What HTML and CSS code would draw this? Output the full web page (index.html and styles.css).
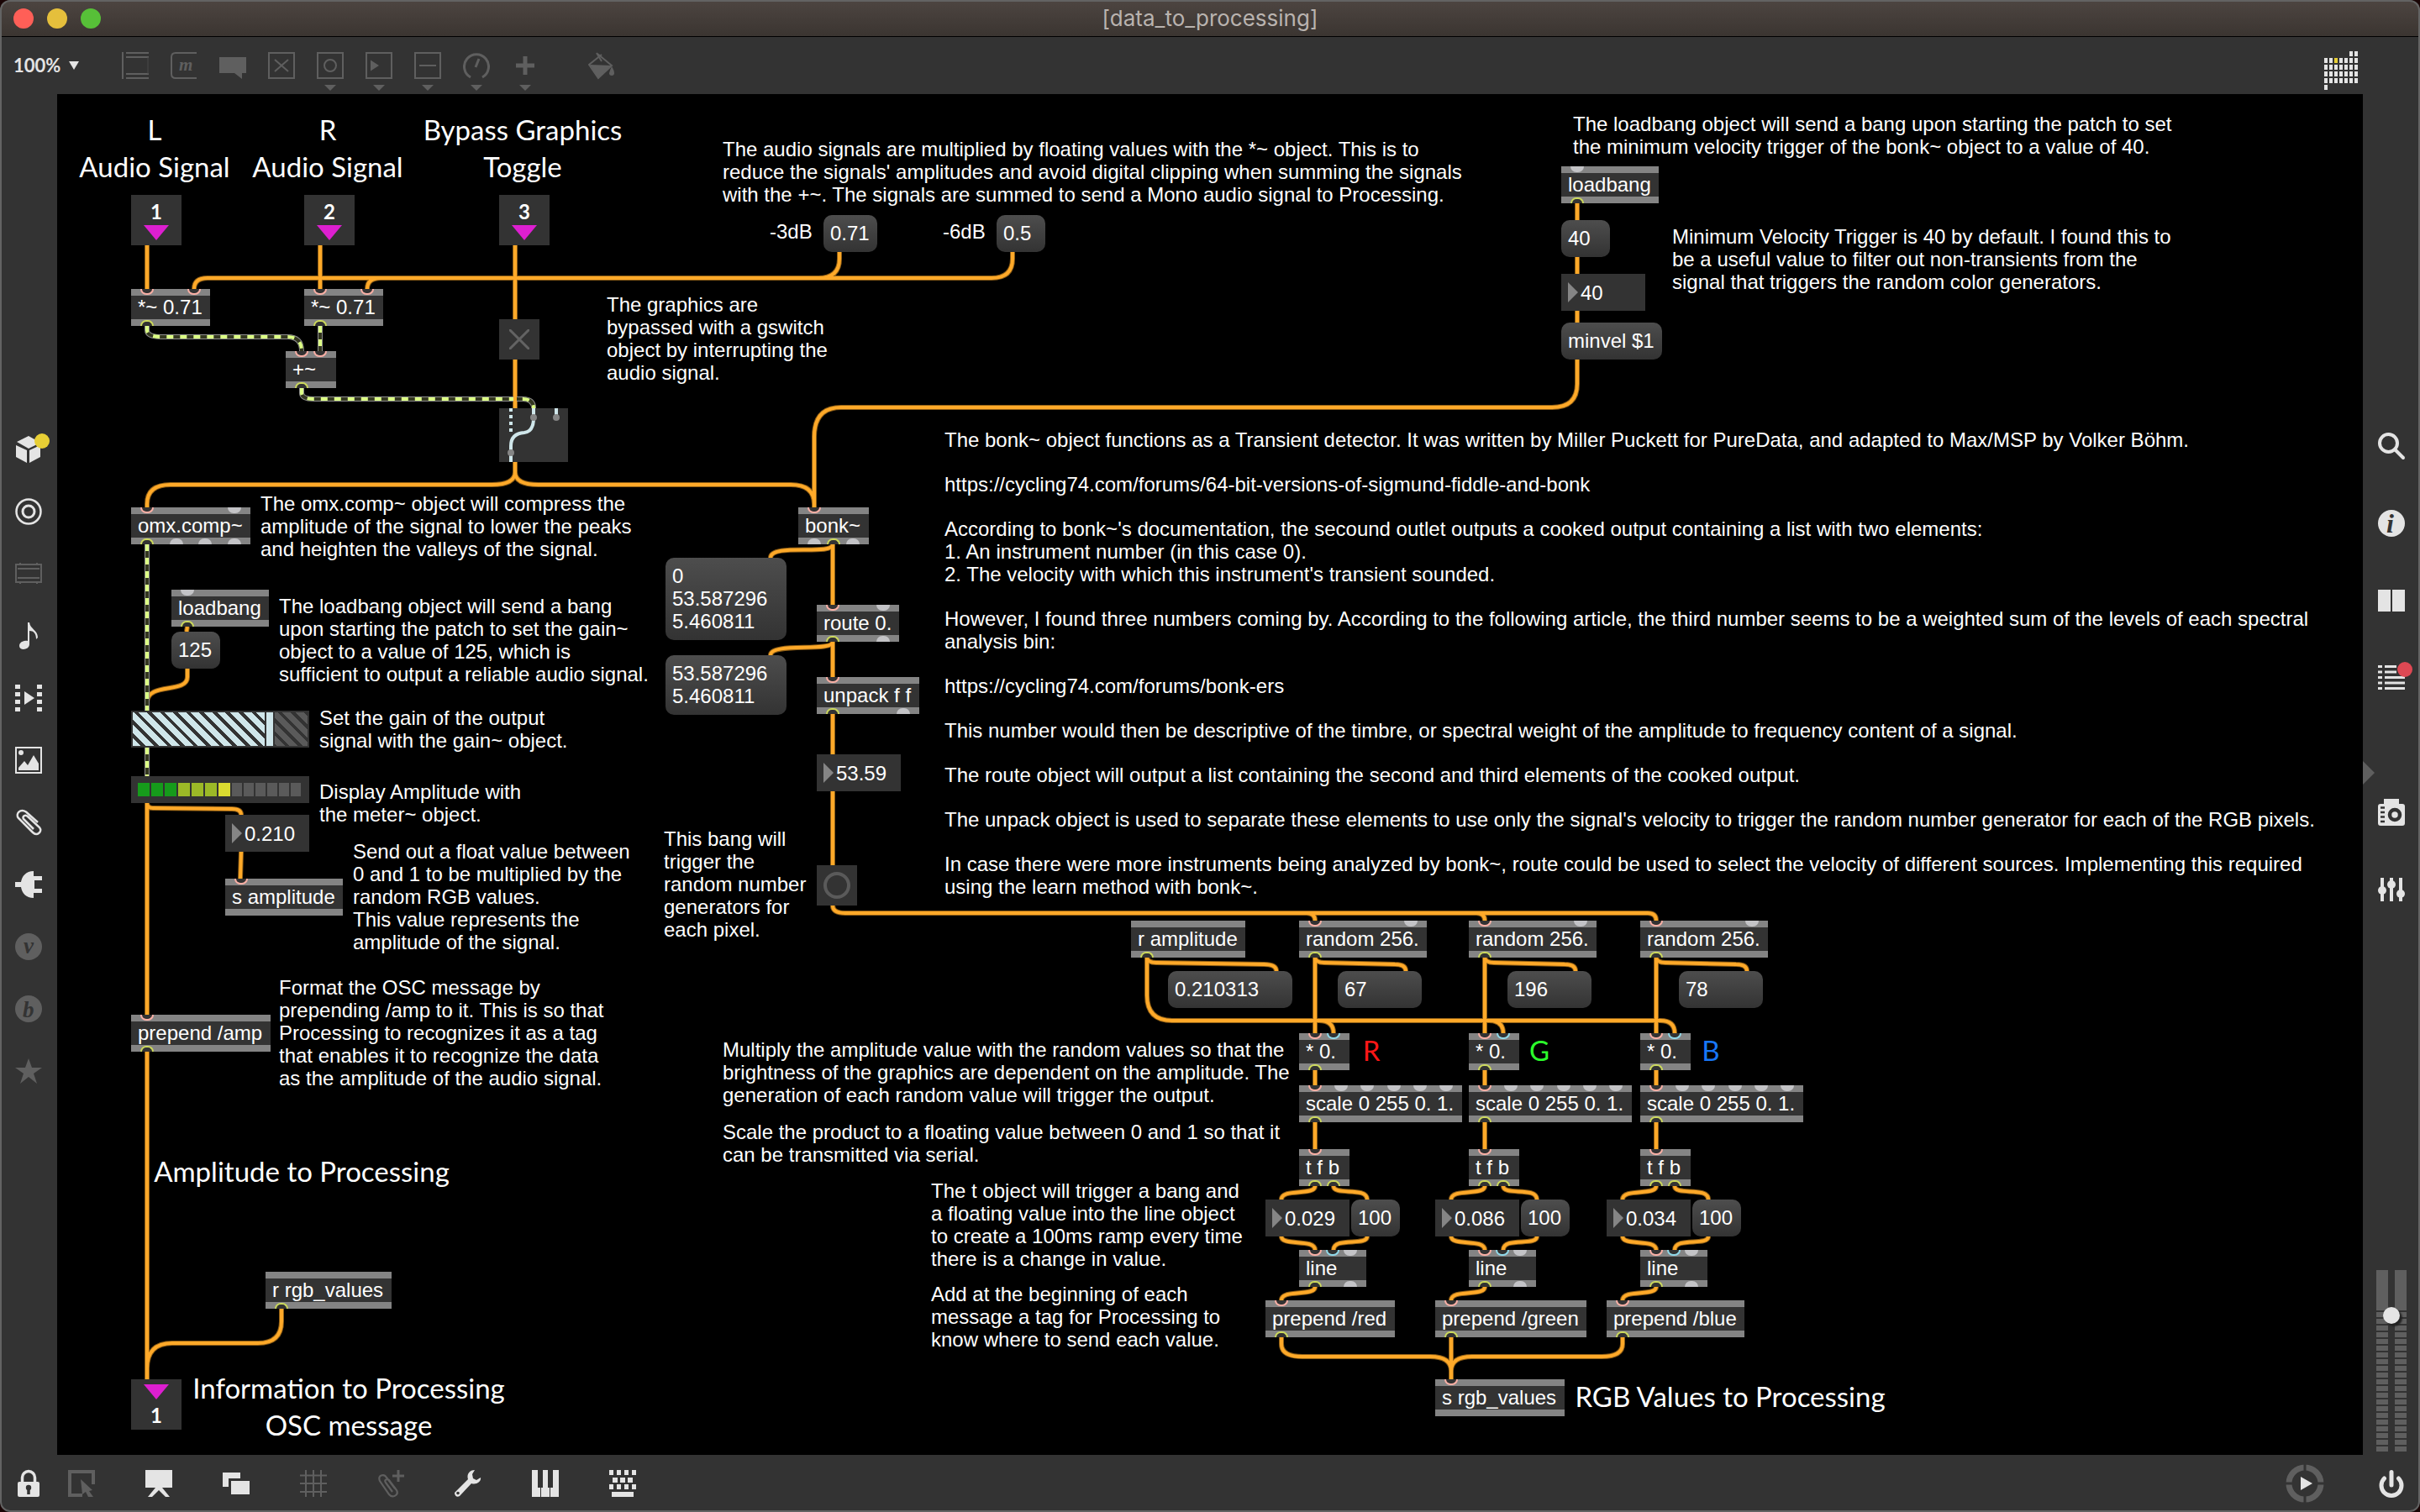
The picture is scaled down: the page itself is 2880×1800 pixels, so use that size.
FILE: index.html
```html
<!DOCTYPE html>
<html lang="en">
<head>
<meta charset="utf-8">
<title>[data_to_processing]</title>
<link rel="stylesheet" href="styles.css">
</head>
<body>
<div class="window">
<header class="titlebar">
  <div class="lights"><button class="light close" aria-label="Close"></button><button class="light minimise" aria-label="Minimise"></button><button class="light zoom" aria-label="Zoom"></button></div>
  <h1>[data_to_processing]</h1>
</header>

<nav class="toolbar" aria-label="Objects">
  <div class="zoom-level">
    <select aria-label="Zoom level"><option>100%</option></select>
    <svg width="12" height="10" viewBox="0 0 12 10"><path d="M0 0H12L6 10Z" fill="#e4e4e4"/></svg>
  </div>
  <div class="tools">
    <button aria-label="Object"><svg viewBox="0 0 32 46"><path d="M1 0V32M5 1H32M5 6H32M5 26H32M5 31H32" class="line"/><path d="M31 6V26" stroke="#484848"/></svg></button>
    <button aria-label="Message"><svg viewBox="0 0 32 46"><path d="M31 1H6Q1 1 1 6V26Q1 31 6 31H31" class="line"/><text x="10" y="22" class="glyph" font-size="21">m</text></svg></button>
    <button aria-label="Comment"><svg viewBox="0 0 32 46"><path d="M0 6H33V25H27V32L18 25H0Z" fill="#5f5f5f"/></svg></button>
    <button aria-label="Toggle"><svg viewBox="0 0 32 46"><path d="M1 1H31V31H1ZM8 9L24 23M24 9L8 23" class="line"/></svg></button>
    <button aria-label="Button"><svg viewBox="0 0 32 46"><path d="M1 1H31V31H1Z" class="line"/><circle cx="16" cy="16" r="7" class="line"/><path d="M9 39H23L16 46Z" fill="#5f5f5f"/></svg></button>
    <button aria-label="Number"><svg viewBox="0 0 32 46"><path d="M1 1H31V31H1Z" class="line"/><path d="M6 9.500L16 16L6 22.500ZM9 39H23L16 46Z" fill="#5f5f5f"/></svg></button>
    <button aria-label="Slider"><svg viewBox="0 0 32 46"><path d="M1 1H31V31H1ZM6 16H26" class="line"/><path d="M9 39H23L16 46Z" fill="#5f5f5f"/></svg></button>
    <button aria-label="Dial"><svg viewBox="0 0 32 46"><path d="M9 30A14.500 14.500 0 1 1 23 30M15 18L19 8" class="line medium"/><path d="M9 39H23L16 46Z" fill="#5f5f5f"/></svg></button>
    <button aria-label="Add"><svg viewBox="0 0 32 46"><path d="M16 5V27M5 16H27" class="line thick"/><path d="M9 39H23L16 46Z" fill="#5f5f5f"/></svg></button>
  </div>
  <button class="paint" aria-label="Format"><svg viewBox="0 0 32 46"><path d="M11 2L28 16L12 31L1 15L16 3" fill="none" stroke="#5f5f5f" stroke-width="2"/><path d="M2 15L28 16L12 31Z" fill="#5f5f5f"/><path d="M10 1L16 11" stroke="#5f5f5f" stroke-width="2"/><path d="M28 17Q31 22 31 25A3 3 0 0 1 25 25Q26 21 28 17Z" fill="#5f5f5f"/></svg></button>
  <button class="calendar" aria-label="Reference"><svg width="42" height="48" viewBox="0 0 42 48"><defs><pattern id="cells" width="6" height="8" patternUnits="userSpaceOnUse"><path d="M0 0H4V6H0Z" fill="#e4e4e4"/></pattern></defs><path d="M30 0H42V8H30ZM0 8H42V40H0ZM0 40H6V48H0Z" fill="url(#cells)"/><path d="M12 8H16V14H12Z" fill="#e8cf35"/></svg></button>
</nav>

<aside class="side left" aria-label="Browsers">
  <button aria-label="Packages"><svg viewBox="0 0 32 32"><path d="M2 7L16 0L30 8L16 15ZM1 11L14 17V32L1 25ZM17 17L30 11V25L17 32Z" fill="#e4e4e4"/></svg><span class="dot yellow"></span></button>
  <button aria-label="Target"><svg viewBox="0 0 32 32"><g fill="none" stroke="#e4e4e4" stroke-width="2.500"><circle cx="16" cy="16" r="14.500"/><circle cx="16" cy="16" r="7" stroke-width="3"/></g></svg></button>
  <button aria-label="Devices"><svg viewBox="0 0 32 32"><path d="M1 5H31V26H1ZM3 10H29M3 21H29M6 3V5M26 3V5M6 26V28M26 26V28" fill="none" stroke="#5f5f5f" stroke-width="2"/></svg></button>
  <button aria-label="Audio"><svg viewBox="0 0 32 32"><path d="M15 0H17C18 8 27 9 27 18L25 20C25 13 22 10 17 10V26C17 33 5 34 5 28C5 23 11 21 15 22Z" fill="#e4e4e4"/></svg></button>
  <button aria-label="Video"><svg viewBox="0 0 32 32"><path d="M0 0H6V5H0ZM0 9H6V14H0ZM0 18H6V23H0ZM0 27H6V32H0ZM26 0H32V5H26ZM26 9H32V14H26ZM26 18H32V23H26ZM26 27H32V32H26ZM11 8L23 16L11 24Z" fill="#e4e4e4"/></svg></button>
  <button aria-label="Images"><svg viewBox="0 0 32 32"><path d="M1 1H31V31H1Z" fill="none" stroke="#e4e4e4" stroke-width="2"/><circle cx="7" cy="7" r="3" fill="#e4e4e4"/><path d="M4 28V25L11 17L15 22L22 10L28 20V28Z" fill="#e4e4e4"/></svg></button>
  <button aria-label="Snippets"><svg viewBox="0 0 32 32"><path d="M27 16L13 3.500C6 -1 0 6 4 11L21 28C26 33 33 27 29 22L15 9C12 6 8 9 10 12L22 24" fill="none" stroke="#e4e4e4" stroke-width="2.500"/></svg></button>
  <button aria-label="Plug-ins"><svg viewBox="0 0 32 32"><path d="M22 0V6H32V11H23V21H32V26H22V32C13 32 8 26 7 19H0V13H7C8 6 13 0 22 0Z" fill="#e4e4e4"/></svg></button>
  <button aria-label="Vizzie"><svg viewBox="0 0 32 32"><circle cx="16" cy="16" r="16" fill="#5f5f5f"/><text x="10" y="24" class="glyph cut" font-size="27">v</text></svg></button>
  <button aria-label="Beap"><svg viewBox="0 0 32 32"><circle cx="16" cy="16" r="16" fill="#5f5f5f"/><text x="9" y="26" class="glyph cut" font-size="27">b</text></svg></button>
  <button aria-label="Favourites"><svg viewBox="0 0 32 32"><path d="M16 1L20 12H32L22 19L26 31L16 23L6 31L10 19L0 12H12Z" fill="#5f5f5f"/></svg></button>
</aside>

<main class="canvas">
  <svg class="cords" width="2744" height="1620" viewBox="0 0 2744 1620">
    <defs>
      <g id="control">
        <path d="M175 292V344M381 292V344M613 292V380M999 300V308Q999 331 974 331H247Q231 331 231 344M1205 300V308Q1205 331 1180 331H453Q437 331 437 344"/>
        <path d="M613 428V486M613 550V562Q613 577 585 577H203Q175 577 175 600V604M613 550V562Q613 577 641 577H941Q969 577 969 600V604"/>
        <path d="M1877 242V262M1877 306V326M1877 370V384M1877 428V457Q1877 485 1847 485H1001Q969 485 969 520V604"/>
        <path d="M223 746L222 752M223 796V806C223 826 175 812 175 836V846M175 956V1208M175 956Q175 962 182 962L276 963Q287 963 287 970M287 1014L286 1046M175 1252V1642M335 1558V1573Q335 1599 307 1599H205Q175 1599 175 1629V1642"/>
        <path d="M991 648V720M991 648C991 662 917 646 917 664M991 764V806M991 764C991 777 917 764 917 780M991 850V898M991 942V1030"/>
        <path d="M991 1078Q991 1087 1006 1087H1555Q1565 1087 1565 1096M1545 1087H1757Q1767 1087 1767 1096M1747 1087H1961Q1971 1087 1971 1096"/>
        <path d="M1365 1140Q1366 1146 1376 1146L1504 1148Q1519 1148 1519 1156M1365 1140V1185Q1365 1215 1395 1215H1570Q1587 1215 1587 1230M1565 1215H1772Q1789 1215 1789 1230M1765 1215H1976Q1993 1215 1993 1230"/>
        <g id="channel">
          <path d="M1565 1140V1230M1565 1140Q1566 1146 1576 1146L1660 1148Q1673 1148 1673 1156M1565 1274V1292M1565 1336V1368"/>
          <path d="M1565 1412C1565 1424 1525 1414 1525 1428M1587 1412C1587 1424 1627 1412 1627 1428M1525 1472C1525 1484 1565 1474 1565 1488M1627 1472C1627 1484 1587 1472 1587 1488M1565 1532C1565 1544 1525 1534 1525 1548"/>
        </g>
        <use href="#channel" x="202"/>
        <use href="#channel" x="406"/>
        <path d="M1525 1592V1600Q1525 1615 1550 1615H1702Q1727 1615 1727 1632M1931 1592V1600Q1931 1615 1906 1615H1752Q1727 1615 1727 1632M1727 1592V1642"/>
      </g>
      <g id="signal">
        <path d="M175 388V393Q175 401 192 401H342Q359 401 359 418M381 388V418M359 462V468Q359 475 374 475H622Q635 475 635 486M175 648V846M175 890V924"/>
      </g>
    </defs>
    <g transform="translate(-68 -112)" fill="none">
      <use href="#control" stroke="#8f5f16" stroke-width="6"/>
      <use href="#control" stroke="#ffa929" stroke-width="4"/>
      <use href="#signal" stroke="#8c8c8c" stroke-width="6"/>
      <use href="#signal" stroke="#33361f" stroke-width="4"/>
      <use href="#signal" stroke="#dcff85" stroke-width="4" stroke-dasharray="8 8"/>
      <path d="M613 440V486" stroke="#ffa929" stroke-width="4"/>
    </g>
  </svg>

  <!-- headings -->
  <h2 class="head" style="left:26px;top:20px;width:180px">L<br>Audio Signal</h2>
  <h2 class="head" style="left:232px;top:20px;width:180px">R<br>Audio Signal</h2>
  <h2 class="head" style="left:434px;top:20px;width:240px">Bypass Graphics<br>Toggle</h2>
  <h2 class="head" style="left:115px;top:1260px;width:352px">Amplitude to Processing</h2>
  <h2 class="head" style="left:164px;top:1518px;width:366px">Information to Processing<br>OSC message</h2>
  <h2 class="head" style="left:1808px;top:1528px;width:366px">RGB Values to Processing</h2>
  <h2 class="head red" style="left:1552px;top:1116px;width:24px">R</h2>
  <h2 class="head green" style="left:1752px;top:1116px;width:24px">G</h2>
  <h2 class="head blue" style="left:1956px;top:1116px;width:24px">B</h2>

  <!-- comments -->
  <p class="note" style="left:792px;top:52px">The audio signals are multiplied by floating values with the *~ object. This is to<br>reduce the signals' amplitudes and avoid digital clipping when summing the signals<br>with the +~. The signals are summed to send a Mono audio signal to Processing.</p>
  <p class="note" style="left:848px;top:150px">-3dB</p>
  <p class="note" style="left:1054px;top:150px">-6dB</p>
  <p class="note" style="left:654px;top:237px">The graphics are<br>bypassed with a gswitch<br>object by interrupting the<br>audio signal.</p>
  <p class="note" style="left:1804px;top:22px">The loadbang object will send a bang upon starting the patch to set<br>the minimum velocity trigger of the bonk~ object to a value of 40.</p>
  <p class="note" style="left:1922px;top:156px">Minimum Velocity Trigger is 40 by default. I found this to<br>be a useful value to filter out non-transients from the<br>signal that triggers the random color generators.</p>
  <div class="note essay" style="left:1056px;top:398px">
    <p>The bonk~ object functions as a Transient detector. It was written by Miller Puckett for PureData, and adapted to Max/MSP by Volker Böhm.</p>
    <p>https://cycling74.com/forums/64-bit-versions-of-sigmund-fiddle-and-bonk</p>
    <p>According to bonk~'s documentation, the secound outlet outputs a cooked output containing a list with two elements:<br>1. An instrument number (in this case 0).<br>2. The velocity with which this instrument's transient sounded.</p>
    <p>However, I found three numbers coming by. According to the following article, the third number seems to be a weighted sum of the levels of each spectral<br>analysis bin:</p>
    <p>https://cycling74.com/forums/bonk-ers</p>
    <p>This number would then be descriptive of the timbre, or spectral weight of the amplitude to frequency content of a signal.</p>
    <p>The route object will output a list containing the second and third elements of the cooked output.</p>
    <p>The unpack object is used to separate these elements to use only the signal's velocity to trigger the random number generator for each of the RGB pixels.</p>
    <p>In case there were more instruments being analyzed by bonk~, route could be used to select the velocity of different sources. Implementing this required<br>using the learn method with bonk~.</p>
  </div>
  <p class="note" style="left:242px;top:474px">The omx.comp~ object will compress the<br>amplitude of the signal to lower the peaks<br>and heighten the valleys of the signal.</p>
  <p class="note" style="left:264px;top:596px">The loadbang object will send a bang<br>upon starting the patch to set the gain~<br>object to a value of 125, which is<br>sufficient to output a reliable audio signal.</p>
  <p class="note" style="left:312px;top:729px">Set the gain of the output<br>signal with the gain~ object.</p>
  <p class="note" style="left:312px;top:817px">Display Amplitude with<br>the meter~ object.</p>
  <p class="note" style="left:352px;top:888px">Send out a float value between<br>0 and 1 to be multiplied by the<br>random RGB values.<br>This value represents the<br>amplitude of the signal.</p>
  <p class="note" style="left:264px;top:1050px">Format the OSC message by<br>prepending /amp to it. This is so that<br>Processing to recognizes it as a tag<br>that enables it to recognize the data<br>as the amplitude of the audio signal.</p>
  <p class="note" style="left:722px;top:873px">This bang will<br>trigger the<br>random number<br>generators for<br>each pixel.</p>
  <p class="note" style="left:792px;top:1124px">Multiply the amplitude value with the random values so that the<br>brightness of the graphics are dependent on the amplitude. The<br>generation of each random value will trigger the output.</p>
  <p class="note" style="left:792px;top:1222px">Scale the product to a floating value between 0 and 1 so that it<br>can be transmitted via serial.</p>
  <p class="note" style="left:1040px;top:1292px">The t object will trigger a bang and<br>a floating value into the line object<br>to create a 100ms ramp every time<br>there is a change in value.</p>
  <p class="note" style="left:1040px;top:1415px">Add at the beginning of each<br>message a tag for Processing to<br>know where to send each value.</p>

  <!-- audio input -->
  <div class="terminal" style="left:88px;top:120px">1<span class="arrow"></span></div>
  <div class="terminal" style="left:294px;top:120px">2<span class="arrow"></span></div>
  <div class="terminal" style="left:526px;top:120px">3<span class="arrow"></span></div>
  <button class="msg" style="left:912px;top:144px;width:64px">0.71</button>
  <button class="msg" style="left:1118px;top:144px;width:58px">0.5</button>
  <div class="obj" style="left:88px;top:232px;width:94px"><div class="ports in"><i class="hot"></i><i class="hot"></i></div>*~ 0.71<div class="ports out"><i class="on"></i></div></div>
  <div class="obj" style="left:294px;top:232px;width:94px"><div class="ports in"><i class="hot"></i><i class="hot"></i></div>*~ 0.71<div class="ports out"><i class="on"></i></div></div>
  <div class="obj" style="left:272px;top:306px;width:60px"><div class="ports in"><i class="hot"></i><i class="hot"></i></div>+~<div class="ports out"><i class="on"></i></div></div>
  <input type="checkbox" class="toggle" aria-label="Bypass graphics" style="left:526px;top:268px">
  <svg class="gswitch" style="left:526px;top:374px" width="82" height="64" viewBox="0 0 82 64"><path d="M0 0H82V64H0Z" fill="#333"/><g fill="none" stroke="#cfe6ea" stroke-width="4"><path d="M14 0V28" stroke-dasharray="4 4"/><path d="M41 0V14Q40 28 30 29Q14 30 14 45V64M68 0V10"/></g><g fill="#858585"><circle cx="41" cy="11" r="4"/><circle cx="68" cy="11" r="4"/><circle cx="14" cy="53" r="4"/></g></svg>

  <!-- minimum velocity -->
  <div class="obj" style="left:1790px;top:86px;width:116px"><div class="ports in"><i></i></div>loadbang<div class="ports out"><i class="on"></i></div></div>
  <button class="msg" style="left:1790px;top:150px;width:58px">40</button>
  <label class="num" style="left:1790px;top:214px"><input value="40" aria-label="Minimum velocity"></label>
  <button class="msg" style="left:1790px;top:272px;width:120px">minvel $1</button>

  <!-- amplitude -->
  <div class="obj" style="left:88px;top:492px;width:142px"><div class="ports in"><i class="hot"></i><i></i></div>omx.comp~<div class="ports out"><i class="on"></i><i></i><i></i><i></i></div></div>
  <div class="obj" style="left:136px;top:590px;width:116px"><div class="ports in"><i></i></div>loadbang<div class="ports out"><i class="on"></i></div></div>
  <button class="msg" style="left:136px;top:640px;width:58px">125</button>
  <input type="range" class="gain" min="0" max="157" value="125" aria-label="Gain" style="left:88px;top:734px">
  <div class="meter" style="left:88px;top:812px"><i class="g"></i><i class="g"></i><i class="g"></i><i class="l"></i><i class="l"></i><i class="l"></i><i class="y"></i><i></i><i></i><i></i><i></i><i></i><i></i></div>
  <label class="num" style="left:200px;top:858px"><input value="0.210" aria-label="Amplitude"></label>
  <div class="obj" style="left:200px;top:934px;width:140px"><div class="ports in"><i class="hot"></i></div>s amplitude<div class="ports out"></div></div>
  <div class="obj" style="left:88px;top:1096px;width:166px"><div class="ports in"><i class="hot"></i></div>prepend /amp<div class="ports out"><i class="on"></i></div></div>
  <div class="obj" style="left:248px;top:1402px;width:150px"><div class="ports in"></div>r rgb_values<div class="ports out"><i class="on"></i></div></div>
  <div class="terminal outlet" style="left:88px;top:1530px"><span class="arrow"></span>1</div>

  <!-- transient detection -->
  <div class="obj" style="left:882px;top:492px;width:84px"><div class="ports in"><i class="hot"></i></div>bonk~<div class="ports out"><i></i><i class="on"></i><i></i></div></div>
  <button class="msg" style="left:724px;top:552px;width:144px">0<br>53.587296<br>5.460811</button>
  <div class="obj" style="left:904px;top:608px;width:98px"><div class="ports in"><i class="hot"></i><i></i></div>route 0.<div class="ports out"><i class="on"></i><i></i></div></div>
  <button class="msg" style="left:724px;top:668px;width:144px">53.587296<br>5.460811</button>
  <div class="obj" style="left:904px;top:694px;width:122px"><div class="ports in"><i class="hot"></i></div>unpack f f<div class="ports out"><i class="on"></i><i></i></div></div>
  <label class="num" style="left:904px;top:786px"><input value="53.59" aria-label="Velocity"></label>
  <button class="bang" aria-label="Bang" style="left:904px;top:918px"></button>

  <!-- colour channels -->
  <div class="obj" style="left:1278px;top:984px;width:136px"><div class="ports in"></div>r amplitude<div class="ports out"><i class="on"></i></div></div>
  <button class="msg" style="left:1322px;top:1044px;width:148px">0.210313</button>

  <div class="obj" style="left:1478px;top:984px;width:152px"><div class="ports in"><i class="hot"></i><i></i></div>random 256.<div class="ports out"><i class="on"></i></div></div>
  <button class="msg" style="left:1524px;top:1044px;width:100px">67</button>
  <div class="obj" style="left:1478px;top:1118px;width:60px"><div class="ports in"><i class="hot"></i><i class="cold"></i></div>* 0.<div class="ports out"><i class="on"></i></div></div>
  <div class="obj" style="left:1478px;top:1180px;width:194px"><div class="ports in"><i class="hot"></i><i></i><i></i><i></i><i></i><i></i></div>scale 0 255 0. 1.<div class="ports out"><i class="on"></i></div></div>
  <div class="obj" style="left:1478px;top:1256px;width:60px"><div class="ports in"><i class="hot"></i></div>t f b<div class="ports out"><i class="on"></i><i class="on"></i></div></div>
  <label class="num" style="left:1438px;top:1316px"><input value="0.029" aria-label="Red value"></label>
  <button class="msg" style="left:1540px;top:1316px;width:58px">100</button>
  <div class="obj" style="left:1478px;top:1376px;width:80px"><div class="ports in"><i class="hot"></i><i class="cold"></i><i></i></div>line<div class="ports out"><i class="on"></i><i></i></div></div>
  <div class="obj" style="left:1438px;top:1436px;width:154px"><div class="ports in"><i class="hot"></i></div>prepend /red<div class="ports out"><i class="on"></i></div></div>

  <div class="obj" style="left:1680px;top:984px;width:152px"><div class="ports in"><i class="hot"></i><i></i></div>random 256.<div class="ports out"><i class="on"></i></div></div>
  <button class="msg" style="left:1726px;top:1044px;width:100px">196</button>
  <div class="obj" style="left:1680px;top:1118px;width:60px"><div class="ports in"><i class="hot"></i><i class="cold"></i></div>* 0.<div class="ports out"><i class="on"></i></div></div>
  <div class="obj" style="left:1680px;top:1180px;width:194px"><div class="ports in"><i class="hot"></i><i></i><i></i><i></i><i></i><i></i></div>scale 0 255 0. 1.<div class="ports out"><i class="on"></i></div></div>
  <div class="obj" style="left:1680px;top:1256px;width:60px"><div class="ports in"><i class="hot"></i></div>t f b<div class="ports out"><i class="on"></i><i class="on"></i></div></div>
  <label class="num" style="left:1640px;top:1316px"><input value="0.086" aria-label="Green value"></label>
  <button class="msg" style="left:1742px;top:1316px;width:58px">100</button>
  <div class="obj" style="left:1680px;top:1376px;width:80px"><div class="ports in"><i class="hot"></i><i class="cold"></i><i></i></div>line<div class="ports out"><i class="on"></i><i></i></div></div>
  <div class="obj" style="left:1640px;top:1436px;width:180px"><div class="ports in"><i class="hot"></i></div>prepend /green<div class="ports out"><i class="on"></i></div></div>

  <div class="obj" style="left:1884px;top:984px;width:152px"><div class="ports in"><i class="hot"></i><i></i></div>random 256.<div class="ports out"><i class="on"></i></div></div>
  <button class="msg" style="left:1930px;top:1044px;width:100px">78</button>
  <div class="obj" style="left:1884px;top:1118px;width:60px"><div class="ports in"><i class="hot"></i><i class="cold"></i></div>* 0.<div class="ports out"><i class="on"></i></div></div>
  <div class="obj" style="left:1884px;top:1180px;width:194px"><div class="ports in"><i class="hot"></i><i></i><i></i><i></i><i></i><i></i></div>scale 0 255 0. 1.<div class="ports out"><i class="on"></i></div></div>
  <div class="obj" style="left:1884px;top:1256px;width:60px"><div class="ports in"><i class="hot"></i></div>t f b<div class="ports out"><i class="on"></i><i class="on"></i></div></div>
  <label class="num" style="left:1844px;top:1316px"><input value="0.034" aria-label="Blue value"></label>
  <button class="msg" style="left:1946px;top:1316px;width:58px">100</button>
  <div class="obj" style="left:1884px;top:1376px;width:80px"><div class="ports in"><i class="hot"></i><i class="cold"></i><i></i></div>line<div class="ports out"><i class="on"></i><i></i></div></div>
  <div class="obj" style="left:1844px;top:1436px;width:164px"><div class="ports in"><i class="hot"></i></div>prepend /blue<div class="ports out"><i class="on"></i></div></div>

  <div class="obj" style="left:1640px;top:1530px;width:154px"><div class="ports in"><i class="hot"></i></div>s rgb_values<div class="ports out"></div></div>
</main>

<aside class="side right" aria-label="Inspectors">
  <span class="pull"></span>
  <button aria-label="Search"><svg viewBox="0 0 32 32"><circle cx="12.500" cy="12.500" r="10.500" fill="none" stroke="#e4e4e4" stroke-width="4"/><path d="M20 20L30 30" stroke="#e4e4e4" stroke-width="4" stroke-linecap="round"/></svg></button>
  <button aria-label="Inspector"><svg viewBox="0 0 32 32"><circle cx="16" cy="16" r="16" fill="#e4e4e4"/><text x="10" y="27" class="glyph cut" font-size="32">i</text></svg></button>
  <button aria-label="Reference"><svg viewBox="0 0 32 32"><path d="M0 3H15V29H0ZM17 3H32V29H17Z" fill="#e4e4e4"/></svg></button>
  <button aria-label="Console"><svg viewBox="0 0 32 32"><path d="M0 2.500H5M0 9H5M0 15.500H5M0 22H5M0 28.500H5M8 2.500H22M8 9H22M8 15.500H32M8 22H32M8 28.500H32" stroke="#e4e4e4" stroke-width="3"/></svg><span class="dot alert"></span></button>
  <button class="apart" aria-label="Snapshots"><svg viewBox="0 0 32 32"><path d="M7 0H25V6H29Q32 6 32 9V29Q32 32 29 32H3Q0 32 0 29V9Q0 6 3 6H7Z" fill="#e4e4e4"/><path d="M3 10.500H8M3 16H8M3 21.500H8M3 27H8" stroke="#333" stroke-width="2.500"/><circle cx="20" cy="19" r="6" fill="none" stroke="#333" stroke-width="4.500"/></svg></button>
  <button aria-label="Parameters"><svg viewBox="0 0 32 32"><path d="M5 2V30M16 2V30M27 2V30" stroke="#e4e4e4" stroke-width="4"/><circle cx="5" cy="17" r="5" fill="#e4e4e4"/><circle cx="16" cy="10" r="5" fill="#e4e4e4"/><circle cx="27" cy="21" r="5" fill="#e4e4e4"/></svg></button>
  <input type="range" class="volume" min="0" max="196" value="152" aria-label="Output volume">
</aside>

<footer class="bottombar">
  <div class="corner"><button aria-label="Lock"><svg viewBox="0 0 32 32"><path d="M8.500 15V9A7.500 7.500 0 0 1 23.500 9V15" fill="none" stroke="#e4e4e4" stroke-width="3.500"/><path d="M5 14H27Q29 14 29 16V30Q29 32 27 32H5Q3 32 3 30V16Q3 14 5 14Z" fill="#e4e4e4"/><circle cx="16" cy="21" r="3.200" fill="#333"/><path d="M16 21V29" stroke="#333" stroke-width="3.500"/></svg></button></div>
  <div class="actions">
    <button aria-label="Select"><svg viewBox="0 0 32 32"><path d="M17 30H2V2H30V17" fill="none" stroke="#5f5f5f" stroke-width="4"/><path d="M15 11L29 24L25 25L30 32H24L21 26L17 29Z" fill="#5f5f5f"/></svg></button>
    <button aria-label="Presentation"><svg viewBox="0 0 32 32"><path d="M0 0H32V21H20L29 32H24L16 24L8 32H3L12 21H0Z" fill="#e4e4e4"/></svg></button>
    <button aria-label="Layers"><svg viewBox="0 0 32 32"><path d="M0 3H21V10H7V20H0ZM10 13H32V29H10Z" fill="#e4e4e4"/></svg></button>
    <button aria-label="Grid"><svg viewBox="0 0 32 32"><path d="M7 0V32M16 0V32M25 0V32M0 6.500H32M0 16H32M0 26H32" stroke="#5f5f5f" stroke-width="2"/></svg></button>
    <button aria-label="Add snippet"><svg viewBox="0 0 32 32"><path d="M21 22L11 9C8 4 0 6 3 13L14 29C18 34 26 30 23 24L14 12C11 10 8 12 10 15L18 26" fill="none" stroke="#5f5f5f" stroke-width="2.200"/><path d="M25 0V14M18 7H32" stroke="#5f5f5f" stroke-width="3"/></svg></button>
    <button aria-label="Settings"><svg viewBox="0 0 32 32"><path d="M24 0C18 0 14 5 16 11L0 27C0 31 3 33 6 31L20 16C26 18 32 14 31 9L26 12L22 10L21 5Z" fill="#e4e4e4"/><circle cx="4" cy="27.500" r="1.800" fill="#333"/></svg></button>
    <button aria-label="Piano"><svg viewBox="0 0 32 32"><path d="M0 0H7V21H10V32H0ZM13 0H19V21H21V32H11V21H13ZM25 0H32V32H22V21H25Z" fill="#e4e4e4"/></svg></button>
    <button aria-label="Keyboard"><svg viewBox="0 0 32 32"><path d="M0 0H5V6H0ZM9 0H14V6H9ZM18 0H23V6H18ZM27 0H32V6H27ZM4 9H10V15H4ZM13 9H19V15H13ZM22 9H28V15H22ZM0 17H5V23H0ZM9 17H14V23H9ZM18 17H23V23H18ZM27 17H32V23H27ZM3 26H29V32H3Z" fill="#e4e4e4"/></svg></button>
  </div>
  <button class="transport" aria-label="Play"><svg width="46" height="46" viewBox="0 0 46 46"><circle cx="23" cy="23" r="19" fill="none" stroke="#5f5f5f" stroke-width="7"/><path d="M23 0V8M23 38V46M0 23H8M38 23H46" stroke="#333" stroke-width="3"/><path d="M18 15L32 23L18 31Z" fill="#e4e4e4"/></svg></button>
  <div class="corner"><button aria-label="Audio on"><svg viewBox="0 0 32 32"><path d="M7.500 10A12 12 0 1 0 24.500 10M16 2.500V18" fill="none" stroke="#e4e4e4" stroke-width="5" stroke-linecap="round"/></svg></button></div>
</footer>
</div>
</body>
</html>
```
FILE: styles.css
```css
*, *::before, *::after { box-sizing: border-box; }

body {
  margin: 0;
  background: #1a0505;
  color: #fff;
  font: 24px/27px "Liberation Sans", Arial, sans-serif;
}

button {
  padding: 0;
  border: 0;
  background: none;
  color: inherit;
  font: inherit;
}

button svg { display: block; }

.window {
  position: relative;
  display: grid;
  grid-template-columns: 68px 1fr 68px;
  grid-template-rows: 44px 68px 1fr 68px;
  min-height: 100vh;
  overflow: hidden;
  border-radius: 12px;
  background: #333;
}

/* thin light edge around the whole window */
.window::after {
  content: "";
  position: absolute;
  inset: 0;
  border: 2px solid #636363;
  border-radius: 12px;
  pointer-events: none;
}

/* title bar */
.titlebar {
  grid-column: 1 / -1;
  display: grid;
  grid-template-columns: 1fr auto 1fr;
  align-items: center;
  padding: 0 16px;
  border-bottom: 1px solid #000;
  background: linear-gradient(#4d4541, #3b3531);
}

.titlebar h1 {
  margin: 0;
  color: #b9b3af;
  font: 400 26px/32px Inter, sans-serif;
}

.lights { display: flex; gap: 16px; }
.light { width: 24px; height: 24px; border-radius: 50%; }
.close { background: #ff5f57; }
.minimise { background: #e5bf3c; }
.zoom { background: #57c038; }

/* toolbars */
.toolbar {
  grid-column: 1 / -1;
  display: flex;
  align-items: flex-start;
  padding: 17px 72px 0 16px;
}

.zoom-level {
  display: flex;
  align-items: center;
  gap: 8px;
  width: 129px;
  height: 34px;
}

.zoom-level select {
  width: 58px;
  padding: 0;
  border: 0;
  appearance: none;
  background: none;
  color: #e4e4e4;
  font: 700 22px/28px Lato, sans-serif;
}

.tools { display: flex; gap: 26px; padding-top: 1px; }
.tools svg, .paint svg { width: 32px; height: 46px; }
.paint { margin: 1px auto 0 59px; }

.line { fill: none; stroke: #5f5f5f; stroke-width: 2; }
.medium { stroke-width: 3; }
.thick { stroke-width: 5; }
.glyph { fill: #5f5f5f; font-family: "Liberation Serif", serif; font-style: italic; font-weight: 700; }
.cut { fill: #333; }

.side {
  position: relative;
  display: flex;
  flex-direction: column;
  align-items: center;
}

.side svg, .actions svg, .corner svg { width: 32px; height: 32px; overflow: visible; }
.side button { position: relative; }
.left { gap: 42px; padding-top: 407px; }
.right { gap: 60px; padding: 403px 0 4px; }
.apart { margin-top: 68px; }

.dot { position: absolute; border-radius: 50%; }
.yellow { top: -3px; left: 23px; width: 18px; height: 18px; background: #e8cf35; }
.alert { top: -3px; left: 23px; width: 18px; height: 18px; background: #dd4853; }

.pull {
  position: absolute;
  top: calc(50% - 16px);
  left: 0;
  border: solid transparent;
  border-width: 14px 0 14px 14px;
  border-left-color: #5f5f5f;
}

.volume {
  width: 36px;
  height: 216px;
  margin: auto 0 0;
  appearance: none;
  writing-mode: vertical-lr;
  direction: rtl;
  background:
    linear-gradient(90deg, transparent 14px, #333 14px 22px, transparent 22px),
    linear-gradient(#5f5f5f, #5f5f5f) 0 0 / 36px 48px no-repeat,
    repeating-linear-gradient(#333 0 2px, #5f5f5f 2px 8px);
}

.volume::-webkit-slider-thumb {
  width: 20px;
  height: 20px;
  appearance: none;
  border-radius: 50%;
  background: #e4e4e4;
  box-shadow: 3px 3px 2px #222;
}

.bottombar {
  grid-column: 1 / -1;
  display: grid;
  grid-template-columns: 68px 1fr auto 68px;
  align-items: center;
}

.corner { display: flex; justify-content: center; }
.actions { display: flex; gap: 60px; padding-left: 13px; }
.transport { padding-right: 46px; }

/* patch */
.canvas {
  position: relative;
  min-height: 1620px;
  overflow: hidden;
  background: #000;
}

.cords { position: absolute; top: 0; left: 0; }

.head, .note, .obj, .msg, .num, .terminal, .toggle, .gswitch, .gain, .meter, .bang {
  position: absolute;
  margin: 0;
}

.head {
  display: flex;
  flex-direction: column;
  align-items: center;
  font: 400 33px/44px Lato, sans-serif;
  text-align: center;
  white-space: nowrap;
}

.red { color: #ff1717; }
.green { color: #2cff2c; }
.blue { color: #1877f7; }

.note { white-space: nowrap; }
.essay { display: flex; flex-direction: column; gap: 26px; }
.essay p { margin: 0; }

.obj {
  height: 44px;
  padding-left: 8px;
  background: #333;
  line-height: 28px;
  white-space: nowrap;
}

.ports {
  display: flex;
  justify-content: space-between;
  height: 8px;
  margin-left: -8px;
  padding: 0 11px;
  background: #848484;
}

.ports i {
  width: 16px;
  height: 7px;
  border-radius: 0 0 8px 8px;
  background: #c3c3c6;
}

.ports.out { align-items: flex-end; }
.ports.out i { border-radius: 8px 8px 0 0; }
.ports .hot, .ports .cold { border: 2px solid #f9afa5; border-top: 0; background: #333; }
.ports .cold { border-color: #8fd8e8; }
.ports .on { border: 2px solid #ccd95c; border-bottom: 0; background: #333; }

.msg {
  padding: 8px 0 9px 8px;
  border-radius: 10px;
  background: linear-gradient(#4d4d4d, #333);
  text-align: left;
  white-space: nowrap;
}

.num {
  display: flex;
  align-items: center;
  gap: 3px;
  width: 100px;
  height: 44px;
  padding-left: 8px;
  background: #333;
}

.num::before {
  content: "";
  border: solid transparent;
  border-width: 12px 0 12px 12px;
  border-left-color: #858585;
}

.num input {
  width: 72px;
  padding: 0;
  border: 0;
  background: none;
  color: #fff;
  font: inherit;
}

.terminal {
  display: flex;
  flex-direction: column;
  align-items: center;
  gap: 3px;
  width: 60px;
  height: 60px;
  padding-top: 6px;
  background: #333;
  font: 700 24px/27px Lato, sans-serif;
}

.outlet { gap: 5px; }

.arrow {
  border: solid transparent;
  border-width: 18px 15px 0;
  border-top-color: #dd1fd0;
}

.toggle {
  width: 48px;
  height: 48px;
  padding: 12px;
  appearance: none;
  background:
    linear-gradient(45deg, transparent calc(50% - 2px), #636363 calc(50% - 1px) calc(50% + 1px), transparent calc(50% + 2px)) content-box,
    linear-gradient(-45deg, transparent calc(50% - 2px), #636363 calc(50% - 1px) calc(50% + 1px), transparent calc(50% + 2px)) content-box,
    #333;
}

.bang { width: 48px; height: 48px; padding: 8px; background: #333; }

.bang::before {
  content: "";
  display: block;
  width: 32px;
  height: 32px;
  border: 4px solid #5a5a5a;
  border-radius: 50%;
}

.gain {
  width: 212px;
  height: 44px;
  border: 2px solid #333;
  appearance: none;
  background:
    repeating-linear-gradient(45deg, #cfe6ea 0 7px, #333 7px 11px) 0 0 / 160px 40px no-repeat,
    repeating-linear-gradient(45deg, #5a5a5a 0 7px, #333 7px 11px);
}

.gain::-webkit-slider-thumb {
  width: 8px;
  height: 40px;
  appearance: none;
  background: #cfe6ea;
  box-shadow: 0 0 0 2px #333;
}

.meter {
  display: flex;
  gap: 2px;
  width: 212px;
  height: 32px;
  padding: 8px;
  background: #333;
}

.meter i { width: 12px; background: #5a5a5a; }
.meter .g, .meter .l, .meter .y { width: 14px; }
.meter .g { background: #169b1b; }
.meter .l { background: #9cb927; }
.meter .y { background: #dadb30; }
```
